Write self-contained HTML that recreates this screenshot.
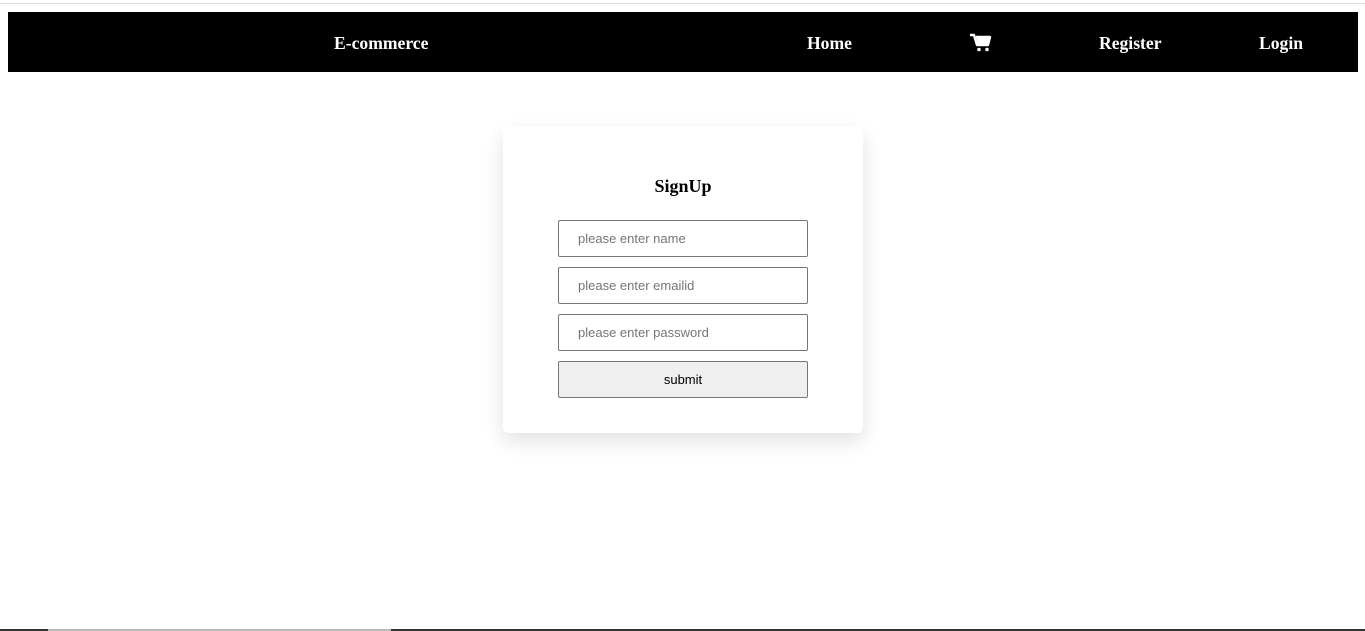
<!DOCTYPE html>
<html><head><style>
html,body{margin:0;padding:0;background:#fff;width:1365px;height:631px;overflow:hidden;position:relative;font-family:"Liberation Serif",serif}
.topline{position:absolute;left:0;top:3px;width:1365px;height:1px;background:#ddd}
.nav{position:absolute;left:8px;top:12px;width:1350px;height:60px;background:#000;color:#fff;font-weight:bold;font-size:17.6px}
.nav span{position:absolute;top:21px;line-height:20px}
.card{position:absolute;left:503px;top:127px;width:360px;height:306px;background:#fff;border-radius:5px;box-shadow:0 8px 20px rgba(0,0,0,0.12)}
h3{position:absolute;left:0;top:48px;width:360px;margin:0;text-align:center;font-size:18px;line-height:22px}
.in{position:absolute;left:55px;width:248px;height:35px;border:1px solid #767676;border-radius:2px;font-family:"Liberation Sans",sans-serif;font-size:13px;color:#757575;line-height:35px;padding-left:19px;box-sizing:content-box}
.btn{position:absolute;left:55px;top:234px;width:248px;height:35px;border:1px solid #767676;border-radius:2px;background:#efefef;font-family:"Liberation Sans",sans-serif;font-size:13px;color:#000;line-height:35px;text-align:center}
.bot{position:absolute;left:0;top:629px;height:2px;width:1365px;background:#333}
.bot i{position:absolute;left:48px;top:0;width:343px;height:2px;background:#bbb}
</style></head><body>
<div class="topline"></div>
<div class="nav">
<span style="left:326px">E-commerce</span>
<span style="left:799px">Home</span>
<svg style="position:absolute;left:961px;top:21px" width="24" height="20" viewBox="0 0 24 20">
<path d="M1 2h4l3 10h11l2-8H7" fill="none" stroke="#fff" stroke-width="2.4" stroke-linejoin="round"/>
<path d="M7 4h14l-2 8H9z" fill="#fff"/>
<circle cx="10" cy="16.5" r="1.8" fill="#fff"/><circle cx="18" cy="16.5" r="1.8" fill="#fff"/>
</svg>
<span style="left:1091px">Register</span>
<span style="left:1251px">Login</span>
</div>
<div class="card">
<h3>SignUp</h3>
<div class="in" style="top:93px;width:229px">please enter name</div>
<div class="in" style="top:140px;width:229px">please enter emailid</div>
<div class="in" style="top:187px;width:229px">please enter password</div>
<div class="btn">submit</div>
</div>
<div class="bot"><i></i></div>
</body></html>
